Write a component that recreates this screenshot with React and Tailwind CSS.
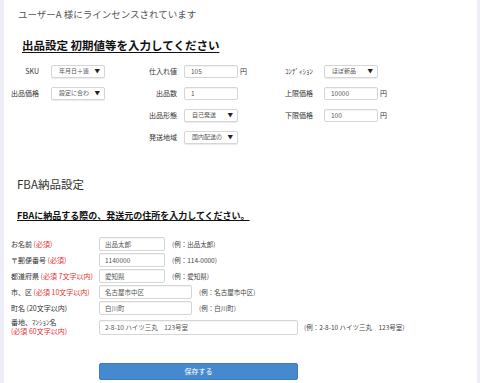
import { useState } from "react";

const font = { fontFamily: '"Noto Sans CJK JP", "Noto Sans", sans-serif' };

function Sel({ value, w = "w-[54px]" }) {
  return (
    <div className={`${w} h-[13px] flex items-center justify-between pl-[7px] pr-[4px] border border-[#d6d6d6] rounded-[2px] bg-white shadow-[0_1px_1px_rgba(0,0,0,0.08)]`}>
      <span className="text-[6px] leading-[8px] text-[#555] whitespace-nowrap">{value}</span>
      <span className="shrink-0 text-[5.5px] leading-[8px] text-[#222]">▼</span>
    </div>
  );
}

function Inp({ value, w = "w-[54px]", h = "h-[13px]", pl = "pl-[6px]" }) {
  return (
    <div className={`${w} ${h} flex items-center ${pl} border border-[#d6d6d6] rounded-[2px] bg-white shadow-[inset_0_1px_1px_rgba(0,0,0,0.05)]`}>
      <span className="text-[6.5px] leading-[8px] text-[#555] whitespace-nowrap">{value}</span>
    </div>
  );
}

function Label({ children, w }) {
  return <div className={`${w} text-right text-[7px] leading-[9px] text-[#333] whitespace-nowrap`}>{children}</div>;
}

const Yen = () => <span className="ml-[2px] text-[7px] leading-[9px] text-[#333]">円</span>;

const addressRows = [
  { label: "お名前", req: "(必須)", value: "出品太郎", w: "w-[66px]", ex: "(例：出品太郎)" },
  { label: "〒郵便番号", req: "(必須)", value: "1140000", w: "w-[66px]", ex: "(例：114-0000)" },
  { label: "都道府県", req: "(必須 7文字以内)", value: "愛知県", w: "w-[66px]", ex: "(例：愛知県)" },
  { label: "市、区", req: "(必須 10文字以内)", value: "名古屋市中区", w: "w-[93px]", ex: "(例：名古屋市中区)" },
  { label: "町名", note: "(20文字以内)", value: "白川町", w: "w-[93px]", ex: "(例：白川町)" },
];

export default function App() {
  const [saved, setSaved] = useState(false);

  return (
    <div className="min-h-[383px] bg-[#eeeef8] pl-[4px] pr-[3px] leading-none" style={font}>
      <div className="h-[383px] bg-white overflow-hidden">
        {/* header */}
        <div className="pt-[8px] pl-[14px] text-[9.5px] leading-[12px] text-[#555]">ユーザーA 様にラインセンスされています</div>

        <div className="mt-[15px] pl-[18px] h-[16px] leading-[16px]">
          <span className="text-[11.5px] leading-[16px] font-bold text-[#111] underline underline-offset-2">出品設定 初期値等を入力してください</span>
        </div>

        {/* initial values */}
        <div className="mt-[9px] flex flex-col">
          <div className="h-[22px] flex items-center">
            <div className="w-[136px] flex items-center">
              <Label w="w-[35px]">SKU</Label>
              <div className="ml-[12px]"><Sel value="年月日＋連" /></div>
            </div>
            <div className="w-[130px] flex items-center">
              <Label w="w-[37px]">仕入れ値</Label>
              <div className="ml-[7px]"><Inp value="105" /></div>
              <Yen />
            </div>
            <div className="flex items-center">
              <Label w="w-[43px]">ｺﾝﾃﾞｨｼｮﾝ</Label>
              <div className="ml-[11px]"><Sel value="ほぼ新品" /></div>
            </div>
          </div>

          <div className="h-[22px] flex items-center">
            <div className="w-[136px] flex items-center">
              <Label w="w-[35px]">出品価格</Label>
              <div className="ml-[12px]"><Sel value="設定に合わ" /></div>
            </div>
            <div className="w-[130px] flex items-center">
              <Label w="w-[37px]">出品数</Label>
              <div className="ml-[7px]"><Inp value="1" /></div>
            </div>
            <div className="flex items-center">
              <Label w="w-[43px]">上限価格</Label>
              <div className="ml-[11px]"><Inp value="10000" /></div>
              <Yen />
            </div>
          </div>

          <div className="h-[22px] flex items-center">
            <div className="w-[136px]" />
            <div className="w-[130px] flex items-center">
              <Label w="w-[37px]">出品形態</Label>
              <div className="ml-[7px]"><Sel value="自己発送" /></div>
            </div>
            <div className="flex items-center">
              <Label w="w-[43px]">下限価格</Label>
              <div className="ml-[11px]"><Inp value="100" /></div>
              <Yen />
            </div>
          </div>

          <div className="h-[22px] flex items-center">
            <div className="w-[136px]" />
            <div className="w-[130px] flex items-center">
              <Label w="w-[37px]">発送地域</Label>
              <div className="ml-[7px]"><Sel value="国内配送の" /></div>
            </div>
          </div>
        </div>

        {/* FBA */}
        <div className="mt-[28px] pl-[13px] h-[16px] text-[11.5px] leading-[16px] text-[#333]">FBA納品設定</div>
        <div className="mt-[14px] pl-[13px] h-[12px] leading-[12px]">
          <span className="text-[9px] leading-[12px] font-bold text-[#111] underline underline-offset-1">FBAに納品する際の、発送元の住所を入力してください。</span>
        </div>

        <div className="mt-[18px] pl-[7px] flex flex-col">
          {addressRows.map((r) => (
            <div key={r.label} className="h-[16px] flex items-center">
              <div className="w-[88px] text-[7px] leading-[9px] whitespace-nowrap">
                <span className="text-[#333]">{r.label} </span>
                {r.req && <span className="text-[#e8312f]">{r.req}</span>}
                {r.note && <span className="text-[#333]">{r.note}</span>}
              </div>
              <Inp value={r.value} w={r.w} h="h-[14px]" pl="pl-[5px]" />
              <span className="ml-[7px] text-[6.5px] leading-[9px] text-[#444] whitespace-nowrap">{r.ex}</span>
            </div>
          ))}
          <div className="mt-[2px] h-[18px] flex items-center">
            <div className="w-[88px] flex flex-col text-[7px] leading-[9px] whitespace-nowrap">
              <span className="text-[#333]">番地、ﾏﾝｼｮﾝ名</span>
              <span className="text-[#e8312f]">(必須 60文字以内)</span>
            </div>
            <Inp value="2-8-10 ハイツ三丸　123号室" w="w-[199px]" h="h-[15px]" pl="pl-[5px]" />
            <span className="ml-[6px] text-[6.5px] leading-[9px] text-[#444] whitespace-nowrap">(例：2-8-10 ハイツ三丸　123号室)</span>
          </div>
        </div>

        <div className="mt-[27px] pl-[95px]">
          <button
            onClick={() => setSaved(!saved)}
            className="w-[199px] h-[17px] flex items-center justify-center rounded-[2px] bg-[#4689cf] border border-[#3a7cc0] text-[7px] leading-[9px] text-white"
            style={font}
          >
            保存する
          </button>
        </div>
      </div>
    </div>
  );
}
